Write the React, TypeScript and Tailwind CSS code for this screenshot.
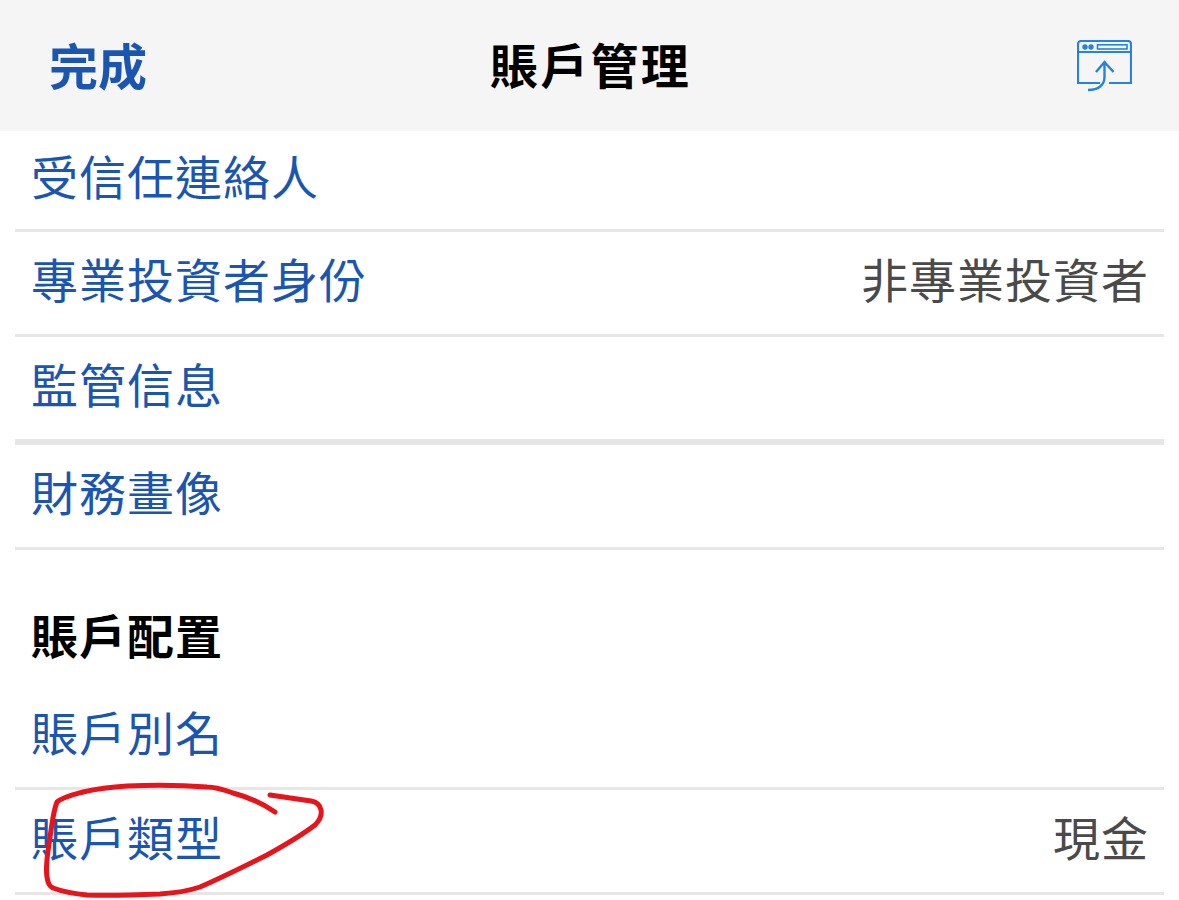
const font = { fontFamily: '"Noto Sans CJK TC", "Noto Sans CJK SC", sans-serif' };

function Row({ label, value, h, thick }: { label: string; value?: string; h: string; thick?: boolean }) {
  return (
    <div className={`ml-[15px] mr-[15px] flex items-center justify-between pb-[11px] pl-[16px] pr-[15px] border-b-[3px] border-[#e6e6e6] ${h} ${thick ? 'border-b-[6px]' : ''}`}>
      <span className="text-[47px] leading-none text-[#1a56b0] tracking-[1px]">{label}</span>
      {value && <span className="text-[47px] leading-none text-[#4a4a4a] tracking-[1px]">{value}</span>}
    </div>
  );
}

export default function App() {
  return (
    <div className="relative h-[900px] w-[1179px] overflow-hidden bg-white" style={font}>
      <header className="flex h-[131px] items-center justify-between bg-[#f5f5f5] pl-[49px] pr-[47px]">
        <span className="w-[55px] whitespace-nowrap pb-[5px] text-[49px] font-bold leading-none text-[#1a56b0]">完成</span>
        <span className="pb-[5px] text-[48px] font-semibold leading-none tracking-[2.3px] text-black">賬戶管理</span>
        <svg className="mt-[1px]" width="55" height="52" viewBox="0 0 55 52" fill="none" stroke="#2383df" strokeWidth="2.2">
          <path d="M1 12V4a3 3 0 0 1 3-3h47a3 3 0 0 1 3 3v8M1 12v31h22M54 12v31H32M1 12h53" />
          <circle cx="8" cy="7" r="2.7" fill="#2383df" stroke="none" />
          <circle cx="14" cy="7" r="2.7" fill="#2383df" stroke="none" />
          <rect x="20.5" y="4.8" width="29.5" height="4.2" strokeWidth="1.6" />
          <path d="M19 32l8.500-10 9 10M27.500 22v15c0 8-6 13-16.500 13" strokeWidth="2.4" />
        </svg>
      </header>
      <Row label="受信任連絡人" h="h-[101px]" />
      <Row label="專業投資者身份" value="非專業投資者" h="h-[105px]" />
      <Row label="監管信息" h="h-[108px]" thick />
      <Row label="財務畫像" h="h-[105px]" />
      <div className="ml-[15px] flex h-[135px] items-end pb-[28px] pl-[16px]">
        <span className="text-[47px] font-bold leading-none tracking-[1px] text-black">賬戶配置</span>
      </div>
      <Row label="賬戶別名" h="h-[105px]" />
      <Row label="賬戶類型" value="現金" h="h-[105px]" />
      <svg className="absolute left-0 top-0" width="1179" height="900" fill="none" stroke="#e8141c" strokeWidth="5" strokeLinecap="round" strokeLinejoin="round">
        <path d="M275 812C262 803 248 797 233 793C222 789 215 787 207 787C180 785 153 785 127 786C110 787 96 789 83 792C72 795 63 797 57 802C53 812 52 825 50 837C48 852 45 865 47 877C48 883 49 886 53 888C64 892 75 894 87 895C112 896 136 895 160 894C175 893 188 891 200 887C223 877 245 866 267 855C285 845 302 835 315 825C320 820 322 815 321 810C320 805 317 802 311 801C298 799 283 797 270 795" />
      </svg>
    </div>
  );
}
